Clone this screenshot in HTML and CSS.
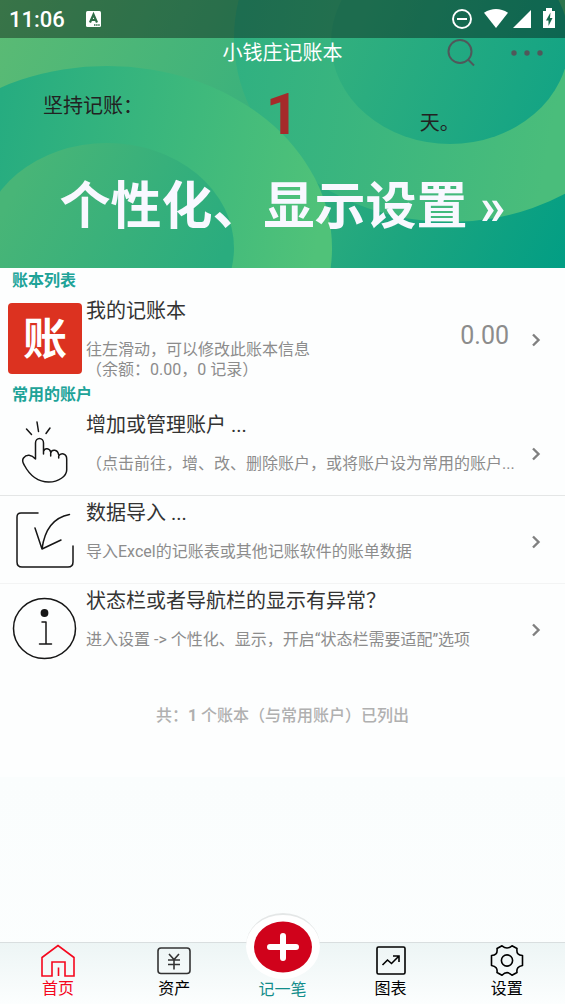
FILE: index.html
```html
<!DOCTYPE html>
<html lang="zh-CN">
<head>
<meta charset="utf-8">
<meta name="viewport" content="width=device-width, initial-scale=1">
<title>小钱庄记账本</title>
<link rel="stylesheet" href="styles.css">
</head>
<body>
<div class="app">
  <header class="hero">
    <svg class="hero-art" viewBox="0 0 565 268" preserveAspectRatio="none" aria-hidden="true">
      <defs>
        <linearGradient id="base" x1="0" y1="0" x2="565" y2="268" gradientUnits="userSpaceOnUse">
          <stop offset="0" stop-color="#5cbb74"/><stop offset=".5" stop-color="#36b07d"/><stop offset=".75" stop-color="#1ca57f"/><stop offset="1" stop-color="#029e84"/>
        </linearGradient>
        <linearGradient id="rightRing" x1="234" y1="0" x2="565" y2="60" gradientUnits="userSpaceOnUse">
          <stop offset="0" stop-color="#2fb081"/><stop offset="1" stop-color="#4abd7b"/>
        </linearGradient>
        <linearGradient id="rightCore" x1="350" y1="30" x2="550" y2="110" gradientUnits="userSpaceOnUse">
          <stop offset="0" stop-color="#30af7e"/><stop offset="1" stop-color="#14a484"/>
        </linearGradient>
        <linearGradient id="leftRing" x1="0" y1="100" x2="332" y2="160" gradientUnits="userSpaceOnUse">
          <stop offset="0" stop-color="#26ac80"/><stop offset="1" stop-color="#50c279"/>
        </linearGradient>
        <linearGradient id="leftCore" x1="30" y1="160" x2="220" y2="260" gradientUnits="userSpaceOnUse">
          <stop offset="0" stop-color="#48b577"/><stop offset="1" stop-color="#2aac7e"/>
        </linearGradient>
      </defs>
      <rect width="565" height="268" fill="url(#base)"/>
      <ellipse cx="450" cy="38" rx="216" ry="184" fill="url(#rightRing)"/>
      <ellipse cx="450" cy="42" rx="119" ry="102" fill="url(#rightCore)"/>
      <ellipse cx="107" cy="248" rx="225" ry="182" fill="url(#leftRing)"/>
      <ellipse cx="107" cy="248" rx="127" ry="105" fill="url(#leftCore)"/>
    </svg>
    <div class="status">
      <time class="clock">11:06</time>
      <svg width="16" height="18" viewBox="0 0 16 18" aria-hidden="true"><rect x="1" y="1" width="15" height="16" rx="1.5" fill="#fff"/><path d="M5 12.500 8.500 4.500 12 12.500M6.200 10h4.600" fill="none" stroke="#2f6d48" stroke-width="2.200"/><path d="M9 15h6" stroke="#2f6d48" stroke-width="1.400" stroke-dasharray="1.500 .6"/></svg>
      <svg class="status-icons" width="106" height="24" viewBox="0 0 106 24" aria-hidden="true">
        <circle cx="12" cy="12" r="9" fill="none" stroke="#fff" stroke-width="1.900"/><path d="M7 12h10" stroke="#fff" stroke-width="2"/>
        <path d="M34 5.800q12-7.500 24 0L46 21Z" fill="#fff"/>
        <path d="M81 3v18H63Z" fill="#fff"/>
        <path d="M93 4h3V1h6v3h3v17H93Z" fill="#fff"/><path d="m100.500 5.500-4.500 8h2.500v5.500l4-8H100Z" fill="#13684b"/>
      </svg>
    </div>
    <div class="titlebar">
      <h1 class="title">小钱庄记账本</h1>
      <div class="tools">
        <button class="tool" aria-label="搜索"><svg width="30" height="30" viewBox="0 0 30 30"><circle cx="14" cy="13.500" r="11.500"/><path d="m22 21.500 6 6"/></svg></button>
        <button class="tool" aria-label="更多"><svg class="dots" width="34" height="30" viewBox="0 0 34 30"><circle cx="4" cy="15" r="2.700"/><circle cx="17" cy="15" r="2.700"/><circle cx="30" cy="15" r="2.700"/></svg></button>
      </div>
    </div>
    <div class="streak">
      <span class="streak-label">坚持记账：</span>
      <strong class="streak-count">1</strong>
      <span class="streak-unit">天。</span>
    </div>
    <a class="promo" href="#settings">个性化、显示设置 »</a>
  </header>

  <main class="content">
    <h2 class="section">账本列表</h2>
    <a class="row" href="#book">
      <span class="book-icon" aria-hidden="true">账</span>
      <span class="body"><span class="name">我的记账本</span><span class="note">往左滑动，可以修改此账本信息<br>（余额：0.00，0 记录）</span></span>
      <span class="amount">0.00</span>
      <svg class="chevron" width="10" height="14" viewBox="0 0 10 14"><path d="m2 1.500 5.500 5.500L2 12.500"/></svg>
    </a>
    <h2 class="section">常用的账户</h2>
    <a class="row lined" href="#accounts">
      <svg class="icon" width="74" height="74" viewBox="0 0 74 74"><path d="m18.500 13 5 5.500M29 6l1.500 9.500M42 12l-4 5.500M27.500 43V27a4 4.500 0 0 1 8 0v11M27.500 43c-4-4.500-9-5-12-1-1.500 2-.8 4.500.7 7 4 7.500 11.500 17 24.500 17 10 0 18-6 18-12V43c0-6-6-6.500-8-3v2m0-3c-1-6-7-6-8-2v3m0-4c-1-4-6-4.500-7-1"/></svg>
      <span class="body"><span class="name">增加或管理账户 ...</span><span class="note single">（点击前往，增、改、删除账户，或将账户设为常用的账户...</span></span>
      <svg class="chevron" width="10" height="14" viewBox="0 0 10 14"><path d="m2 1.500 5.500 5.500L2 12.500"/></svg>
    </a>
    <a class="row lined faint" href="#import">
      <svg class="icon" width="74" height="74" viewBox="0 0 74 74"><path d="M30 9H13q-4 0-4 4v45q0 5 5 5h46q5 0 5-5V42M61.500 10.500Q38 15 34 45L27 24m7 21 19-9"/></svg>
      <span class="body"><span class="name">数据导入 ...</span><span class="note">导入Excel的记账表或其他记账软件的账单数据</span></span>
      <svg class="chevron" width="10" height="14" viewBox="0 0 10 14"><path d="m2 1.500 5.500 5.500L2 12.500"/></svg>
    </a>
    <a class="row" href="#help">
      <svg class="icon" width="74" height="74" viewBox="0 0 74 74"><ellipse cx="36.500" cy="36.500" rx="31" ry="30"/><circle cx="36.500" cy="21" r="3.900" fill="#161616" stroke="none"/><path d="M34 30h4v22m-6.500 0h12"/></svg>
      <span class="body"><span class="name">状态栏或者导航栏的显示有异常？</span><span class="note">进入设置 -&gt; 个性化、显示，开启“状态栏需要适配”选项</span></span>
      <svg class="chevron" width="10" height="14" viewBox="0 0 10 14"><path d="m2 1.500 5.500 5.500L2 12.500"/></svg>
    </a>
    <p class="summary">共：<b>1</b> 个账本（与常用账户）已列出</p>
  </main>

  <nav class="tabs">
    <a class="tab active" href="#home"><svg width="36" height="35" viewBox="0 0 36 35"><path d="M2 33V14.500L18 2.500l16 12V33h-9V19H12v14ZM18.500 24.500V33"/></svg>首页</a>
    <a class="tab" href="#assets"><svg class="soft" width="36" height="35" viewBox="0 0 36 35"><rect x="2" y="5" width="32" height="25.500" rx="3"/><path d="m13 11 5 5.500 5-5.500M12 17h12M12 21.500h12M18 16.500v10"/></svg>资产</a>
    <a class="tab add" href="#new"><span class="add-ring"><svg width="58" height="52" viewBox="0 0 58 52"><ellipse cx="29" cy="26" rx="29" ry="25.500" fill="#d0021b"/><path d="M29 15v22M16 26h26" stroke="#fff" stroke-width="6" stroke-linecap="round"/></svg></span>记一笔</a>
    <a class="tab" href="#charts"><svg width="36" height="35" viewBox="0 0 36 35"><rect x="4" y="4" width="28" height="27" rx="1.500"/><path d="m9.500 22 5-5 4 3.500 7.500-7.500m-6 0h6v6"/></svg>图表</a>
    <a class="tab" id="settings" href="#settings"><svg width="36" height="35" viewBox="0 0 36 35"><circle cx="18" cy="17.500" r="5.600"/><path d="M13 2.800q5 4.400 10 0l5 2.700q-1 7 5.500 7v10q-6.500 1-5.500 7l-5 2.700q-5-5-10 0l-5-2.700q1-6-5.500-7v-10q6.500 0 5.500-7Z" stroke-linejoin="round"/></svg>设置</a>
  </nav>
</div>
</body>
</html>
```
FILE: styles.css
```css
* { box-sizing: border-box; }

body {
  margin: 0;
  font-family: Roboto, "Noto Sans CJK SC", sans-serif;
  color: #333;
}

a { color: inherit; text-decoration: none; }

.app {
  display: flex;
  flex-direction: column;
  min-height: 100vh;
  background: linear-gradient(#fdfefe 0 77.4%, #fafdfd 77.4%, #fcfefe);
}

.hero { position: relative; isolation: isolate; padding-bottom: 20px; }

.hero-art {
  position: absolute;
  inset: 0;
  z-index: -1;
  width: 100%;
  height: 100%;
}

.status {
  display: flex;
  align-items: center;
  gap: 20px;
  height: 38px;
  padding: 0 9px;
  background: rgba(0, 0, 0, 0.38);
  color: #fff;
}

.clock { font-size: 22px; font-weight: 500; }
.status-icons { margin-left: auto; }

.titlebar {
  display: grid;
  grid-template-columns: 1fr auto 1fr;
  align-items: center;
  height: 30px;
}

.title {
  grid-column: 2;
  margin: 0;
  color: #fff;
  font-size: 20px;
  line-height: 28px;
  font-weight: 400;
}

.tools { display: flex; justify-content: flex-end; gap: 34px; padding-right: 21px; }

.tool {
  display: block;
  padding: 0;
  border: 0;
  background: none;
  line-height: 0;
}

.tool svg { fill: none; stroke: #50585a; stroke-width: 2; }
.tool .dots { fill: #50585a; stroke: none; }

.streak {
  display: grid;
  grid-template-columns: repeat(3, 1fr);
  height: 92px;
  color: #222;
  font-size: 20px;
  line-height: 28px;
}

.streak-label, .streak-unit { padding-left: 43px; }
.streak-label { padding-top: 24px; }
.streak-unit { padding-top: 41px; }

.streak-count {
  padding-top: 18px;
  color: #a52a2a;
  font-size: 58px;
  line-height: 56px;
  font-weight: 700;
  text-align: center;
}

.promo {
  display: block;
  padding-top: 6px;
  color: #f8f8ff;
  font-size: 51px;
  line-height: 82px;
  font-weight: 700;
  text-align: center;
  white-space: nowrap;
}

.content { flex: 1; }

.section {
  margin: 0;
  padding-left: 12px;
  color: #20a398;
  font-size: 16px;
  line-height: 26px;
  font-weight: 700;
}

.row {
  display: flex;
  min-height: 88px;
  padding: 2px 24px 0 8px;
}

.lined { border-bottom: 1px solid #e4e6e6; }
.faint { border-color: #f3f4f4; }

.book-icon {
  width: 74px;
  height: 71px;
  margin-top: 7px;
  border-radius: 4px;
  background: #dc3220;
  color: #fff;
  font-size: 44px;
  line-height: 74px;
  font-weight: 700;
  text-align: center;
}

.icon {
  flex: none;
  margin-top: 6px;
  fill: none;
  stroke: #161616;
  stroke-width: 1.5;
  stroke-linecap: round;
  stroke-linejoin: round;
}

.body { flex: 1; min-width: 0; padding-left: 4px; }
.name { display: block; font-size: 20px; line-height: 30px; }

.note {
  display: block;
  margin-top: 14px;
  color: #8c8c8c;
  font-size: 16px;
  line-height: 20px;
}

.single { white-space: nowrap; }

.amount { padding: 25px 6px 0 0; color: #8c8c8c; font-size: 25px; line-height: 30px; }

.chevron {
  flex: none;
  margin: 37px 0 0 16px;
  fill: none;
  stroke: #808080;
  stroke-width: 2.4;
}

.summary {
  margin: 32px 0;
  color: #b0b0b0;
  font-size: 16px;
  line-height: 24px;
  font-weight: 500;
  text-align: center;
}

.summary b { font-weight: 700; }

.tabs {
  display: grid;
  grid-template-columns: 1fr 1fr 100px 1fr 1fr;
  height: 62px;
  border-top: 1px solid #d9dedf;
  background: linear-gradient(#edf5f5, #fcfefe);
}

.tab {
  display: flex;
  flex-direction: column;
  align-items: center;
  color: #000;
  font-size: 16px;
  line-height: 22px;
}

.tab svg { flex: none; fill: none; stroke: currentColor; stroke-width: 1.6; }
.tab .soft { stroke: #333; }
.active { color: #f5071d; }
.add { color: #128d8b; }

.add-ring {
  display: grid;
  place-items: center;
  flex: none;
  width: 74px;
  height: 66px;
  margin-top: -30px;
  border-radius: 50%;
  border-top: 2px solid #e4e7e7;
  background: #fff;
}

.add-ring svg { stroke: none; }
```
